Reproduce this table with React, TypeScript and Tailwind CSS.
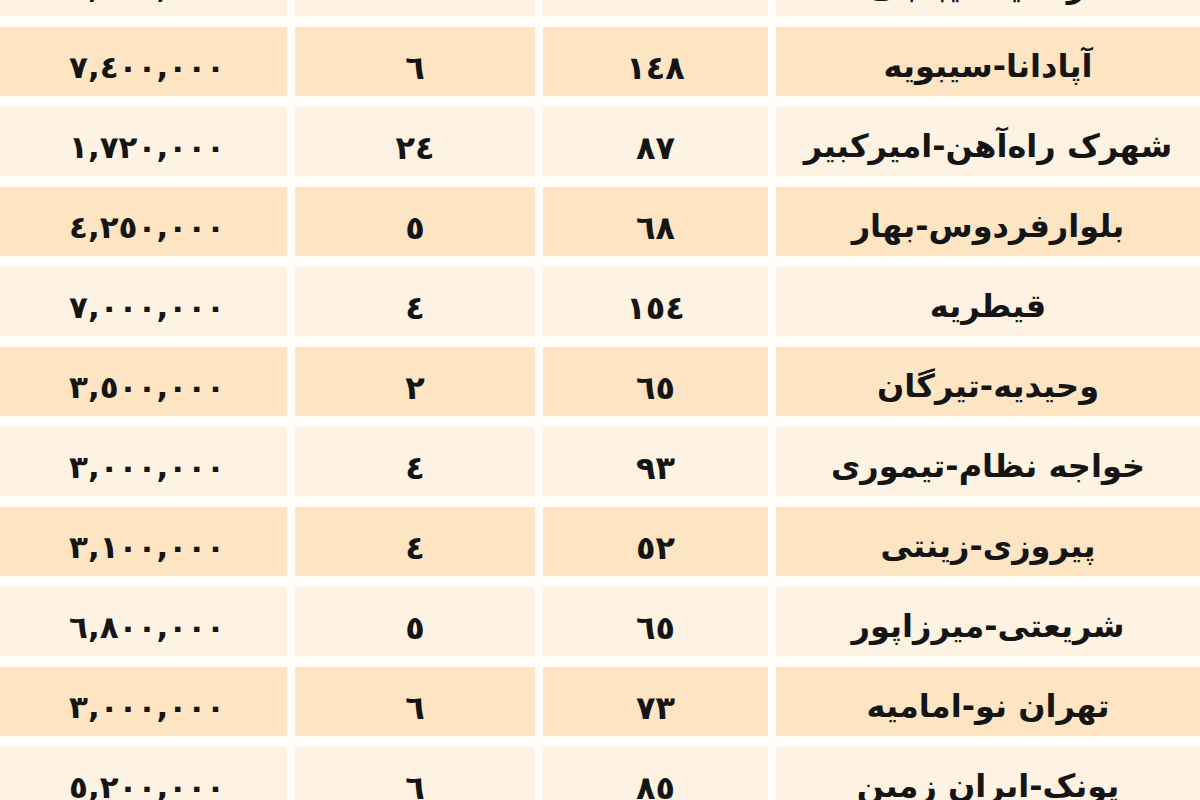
const toFa = (s: string) => s.replace(/[0-9]/g, (d) => String.fromCharCode(0x0660 + Number(d)))

const rows = [
  { price: '3,900,000', count: '3', area: '86', place: 'فرمانیه-دیباجی' },
  { price: '7,400,000', count: '6', area: '148', place: 'آپادانا-سیبویه' },
  { price: '1,720,000', count: '24', area: '87', place: 'شهرک راه‌آهن-امیرکبیر' },
  { price: '4,250,000', count: '5', area: '68', place: 'بلوارفردوس-بهار' },
  { price: '7,000,000', count: '4', area: '154', place: 'قیطریه' },
  { price: '3,500,000', count: '2', area: '65', place: 'وحیدیه-تیرگان' },
  { price: '3,000,000', count: '4', area: '93', place: 'خواجه نظام-تیموری' },
  { price: '3,100,000', count: '4', area: '52', place: 'پیروزی-زینتی' },
  { price: '6,800,000', count: '5', area: '65', place: 'شریعتی-میرزاپور' },
  { price: '3,000,000', count: '6', area: '73', place: 'تهران نو-امامیه' },
  { price: '5,200,000', count: '6', area: '85', place: 'پونک-ایران زمین' },
]

export default function App() {
  return (
    <div className="h-[800px] w-[1200px] overflow-hidden bg-[#fffdf9] font-['DejaVu_Sans',sans-serif] font-bold text-[#151515]">
      <div className="-mt-[53px] flex flex-col gap-[11px]">
        {rows.map((r, i) => {
          const bg = i % 2 === 1 ? 'bg-[#fde5c3]' : 'bg-[#fef3e3]'
          return (
            <div key={i} className="grid h-[69px] grid-cols-[287px_240px_225px_1fr] gap-x-[8px]">
              <div className={`${bg} flex items-center justify-center pt-3 pl-[7px] text-[31px] tracking-[12px]`}>
                {toFa(r.price)}
              </div>
              <div className={`${bg} flex items-center justify-center pt-3 text-[32px] tracking-[3px]`}>
                {toFa(r.count)}
              </div>
              <div className={`${bg} flex items-center justify-center pt-3 text-[32px] tracking-[4px]`}>
                {toFa(r.area)}
              </div>
              <div dir="rtl" className={`${bg} flex items-center justify-center pt-2 text-[32px]`}>
                {r.place}
              </div>
            </div>
          )
        })}
      </div>
    </div>
  )
}
